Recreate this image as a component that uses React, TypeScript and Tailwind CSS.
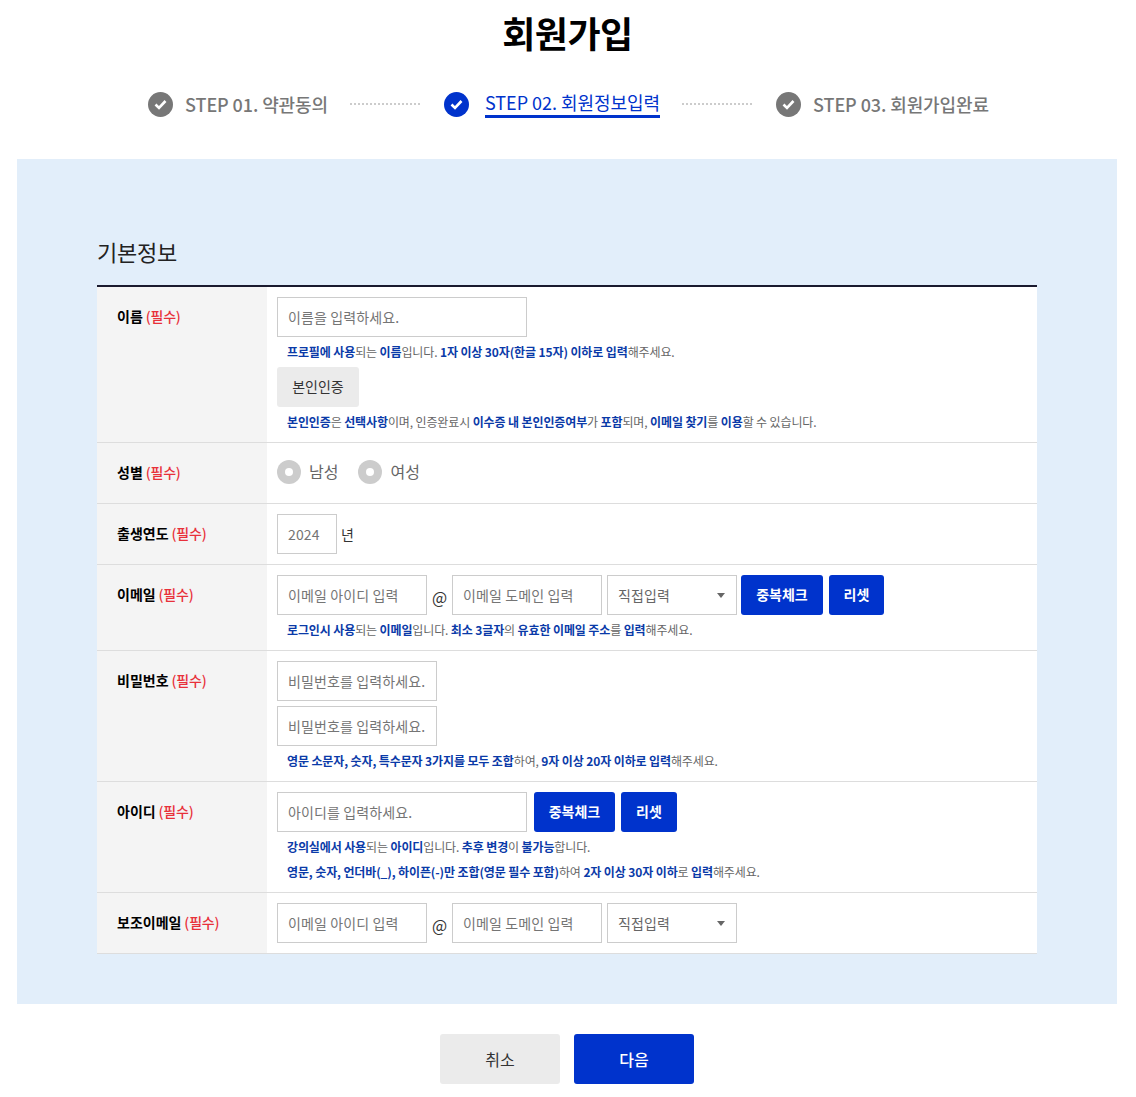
const inputClass =
  'h-10 border border-[#ccc] bg-white px-[10px] pb-[1px] text-sm tracking-[0.12px] text-[#333] placeholder:text-[#757575] outline-none'

const Required = () => <span className="font-medium tracking-[-0.2px] text-[#e8303a]"> (필수)</span>

const B = ({ children }: { children: React.ReactNode }) => (
  <b className="font-bold text-[#0a3aa8]">{children}</b>
)

const Note = ({ children }: { children: React.ReactNode }) => (
  <p className="mt-[5px] h-5 pl-[10px] text-xs leading-5 tracking-[-0.12px] text-[#666]">{children}</p>
)

const BlueButton = ({ label, width }: { label: string; width: string }) => (
  <button className={`h-10 rounded-[3px] bg-[#0033cc] pb-[2px] text-sm font-bold text-white ${width}`}>{label}</button>
)

const Row = ({ label, children }: { label: string; children: React.ReactNode }) => (
  <div className="flex border-b border-[#ddd]">
    <div className="w-[170px] shrink-0 bg-[#f4f4f4] pl-5 pt-[19px] text-sm leading-5 font-bold text-black">
      {label}
      <Required />
    </div>
    <div className="flex-1 bg-white p-[10px]">{children}</div>
  </div>
)

const Check = ({ color }: { color: string }) => (
  <span className={`flex h-[25px] w-[25px] items-center justify-center rounded-full ${color}`}>
    <svg width="13" height="11" viewBox="0 0 13 11" fill="none">
      <path d="M1.5 5.5 L5 9 L11.5 2" stroke="white" strokeWidth="2.6" />
    </svg>
  </span>
)

const Dots = () => <span className="mr-[2px] h-0 w-[70px] border-t-2 border-dotted border-[#ccc]" />

const Step = ({ text, active }: { text: string; active?: boolean }) => (
  <div className={active ? 'flex items-center gap-4' : 'flex items-center gap-3'}>
    <Check color={active ? 'bg-[#0033cc]' : 'bg-[#777]'} />
    <span
      className={
        active
          ? 'border-b-[3px] border-[#0033cc] text-lg leading-[25px] tracking-[-0.03px] text-[#0033cc]'
          : 'text-lg leading-[28px] font-medium tracking-[-0.1px] text-[#777]'
      }
    >
      {text}
    </span>
  </div>
)

const Radio = ({ label }: { label: string }) => (
  <label className="flex items-center gap-2">
    <span className="flex h-6 w-6 items-center justify-center rounded-full bg-[#ccc]">
      <span className="h-2 w-2 rounded-full bg-white" />
    </span>
    <span className="pb-[2px] text-base text-[#666]">{label}</span>
  </label>
)

const DomainSelect = () => (
  <div className="relative w-[130px]">
    <select className={`${inputClass} w-full appearance-none text-[#666]`} defaultValue="direct">
      <option value="direct">직접입력</option>
    </select>
    <span className="absolute top-[18px] right-[12px] h-0 w-0 border-x-[4px] border-t-[5px] border-x-transparent border-t-[#666]" />
  </div>
)

const EmailFields = () => (
  <div className="flex items-center">
    <input className={`${inputClass} w-[150px]`} placeholder="이메일 아이디 입력" />
    <span className="w-[25px] pt-[3px] text-center text-base text-[#333]">@</span>
    <input className={`${inputClass} w-[150px]`} placeholder="이메일 도메인 입력" />
    <span className="w-[5px]" />
    <DomainSelect />
  </div>
)

export default function App() {
  return (
    <div
      className="min-h-[1097px] bg-white"
      style={{ fontFamily: '"Noto Sans CJK KR", "Noto Sans", sans-serif' }}
    >
      <h1 className="pt-[6px] pr-[1px] text-center text-4xl leading-[52px] font-bold tracking-[-0.5px] text-black">회원가입</h1>
      <div className="mt-[32px] flex h-7 items-center justify-center gap-[22px] pl-[1px]">
        <Step text="STEP 01. 약관동의" />
        <Dots />
        <Step text="STEP 02. 회원정보입력" active />
        <Dots />
        <Step text="STEP 03. 회원가입완료" />
      </div>

      <div className="mx-[17px] mt-[41px] w-[1100px] bg-[#e2eefa] px-20 pt-[76px] pb-[50px]">
        <h2 className="h-[35px] text-[22px] leading-[32px] tracking-[-0.25px] text-[#222]">기본정보</h2>
        <div className="mt-[15px] border-t-2 border-[#1a1a2e]">
          <Row label="이름">
            <input className={`${inputClass} block w-[250px]`} placeholder="이름을 입력하세요." />
            <Note>
              <B>프로필에 사용</B>되는 <B>이름</B>입니다. <B>1자 이상 30자(한글 15자) 이하로 입력</B>해주세요.
            </Note>
            <button className="mt-[5px] block h-10 w-[82px] rounded-[3px] bg-[#ebebeb] pb-[2px] text-sm text-[#333]">본인인증</button>
            <Note>
              <B>본인인증</B>은 <B>선택사항</B>이며, 인증완료시 <B>이수증 내 본인인증여부</B>가 <B>포함</B>되며, <B>이메일 찾기</B>를 <B>이용</B>할 수 있습니다.
            </Note>
          </Row>
          <Row label="성별">
            <div className="flex h-10 items-center gap-[20px] pb-[2px]">
              <Radio label="남성" />
              <Radio label="여성" />
            </div>
          </Row>
          <Row label="출생연도">
            <div className="flex items-center gap-1">
              <input className={`${inputClass} w-[60px]`} placeholder="2024" />
              <span className="text-sm text-[#333]">년</span>
            </div>
          </Row>
          <Row label="이메일">
            <div className="flex items-center">
              <EmailFields />
              <div className="ml-1 flex gap-[6px]">
                <BlueButton label="중복체크" width="w-[82px]" />
                <BlueButton label="리셋" width="w-[55px]" />
              </div>
            </div>
            <Note>
              <B>로그인시 사용</B>되는 <B>이메일</B>입니다. <B>최소 3글자</B>의 <B>유효한 이메일 주소</B>를 <B>입력</B>해주세요.
            </Note>
          </Row>
          <Row label="비밀번호">
            <input className={`${inputClass} block w-[160px]`} placeholder="비밀번호를 입력하세요." />
            <input className={`${inputClass} mt-[5px] block w-[160px]`} placeholder="비밀번호를 입력하세요." />
            <Note>
              <B>영문 소문자, 숫자, 특수문자 3가지를 모두 조합</B>하여, <B>9자 이상 20자 이하로 입력</B>해주세요.
            </Note>
          </Row>
          <Row label="아이디">
            <div className="flex">
              <input className={`${inputClass} w-[250px]`} placeholder="아이디를 입력하세요." />
              <div className="ml-[7px] flex gap-[6px]">
                <BlueButton label="중복체크" width="w-[81px]" />
                <BlueButton label="리셋" width="w-[56px]" />
              </div>
            </div>
            <Note>
              <B>강의실에서 사용</B>되는 <B>아이디</B>입니다. <B>추후 변경</B>이 <B>불가능</B>합니다.
            </Note>
            <Note>
              <B>영문, 숫자, 언더바(_), 하이픈(-)만 조합(영문 필수 포함)</B>하여 <B>2자 이상 30자 이하</B>로 <B>입력</B>해주세요.
            </Note>
          </Row>
          <Row label="보조이메일">
            <EmailFields />
          </Row>
        </div>
      </div>

      <div className="mt-[30px] flex justify-center gap-[14px] pr-[2px]">
        <button className="h-[50px] w-[120px] rounded-[3px] bg-[#ebebeb] text-base text-[#333]">취소</button>
        <button className="h-[50px] w-[120px] rounded-[3px] bg-[#0033cc] text-base font-medium text-white">다음</button>
      </div>
    </div>
  )
}
